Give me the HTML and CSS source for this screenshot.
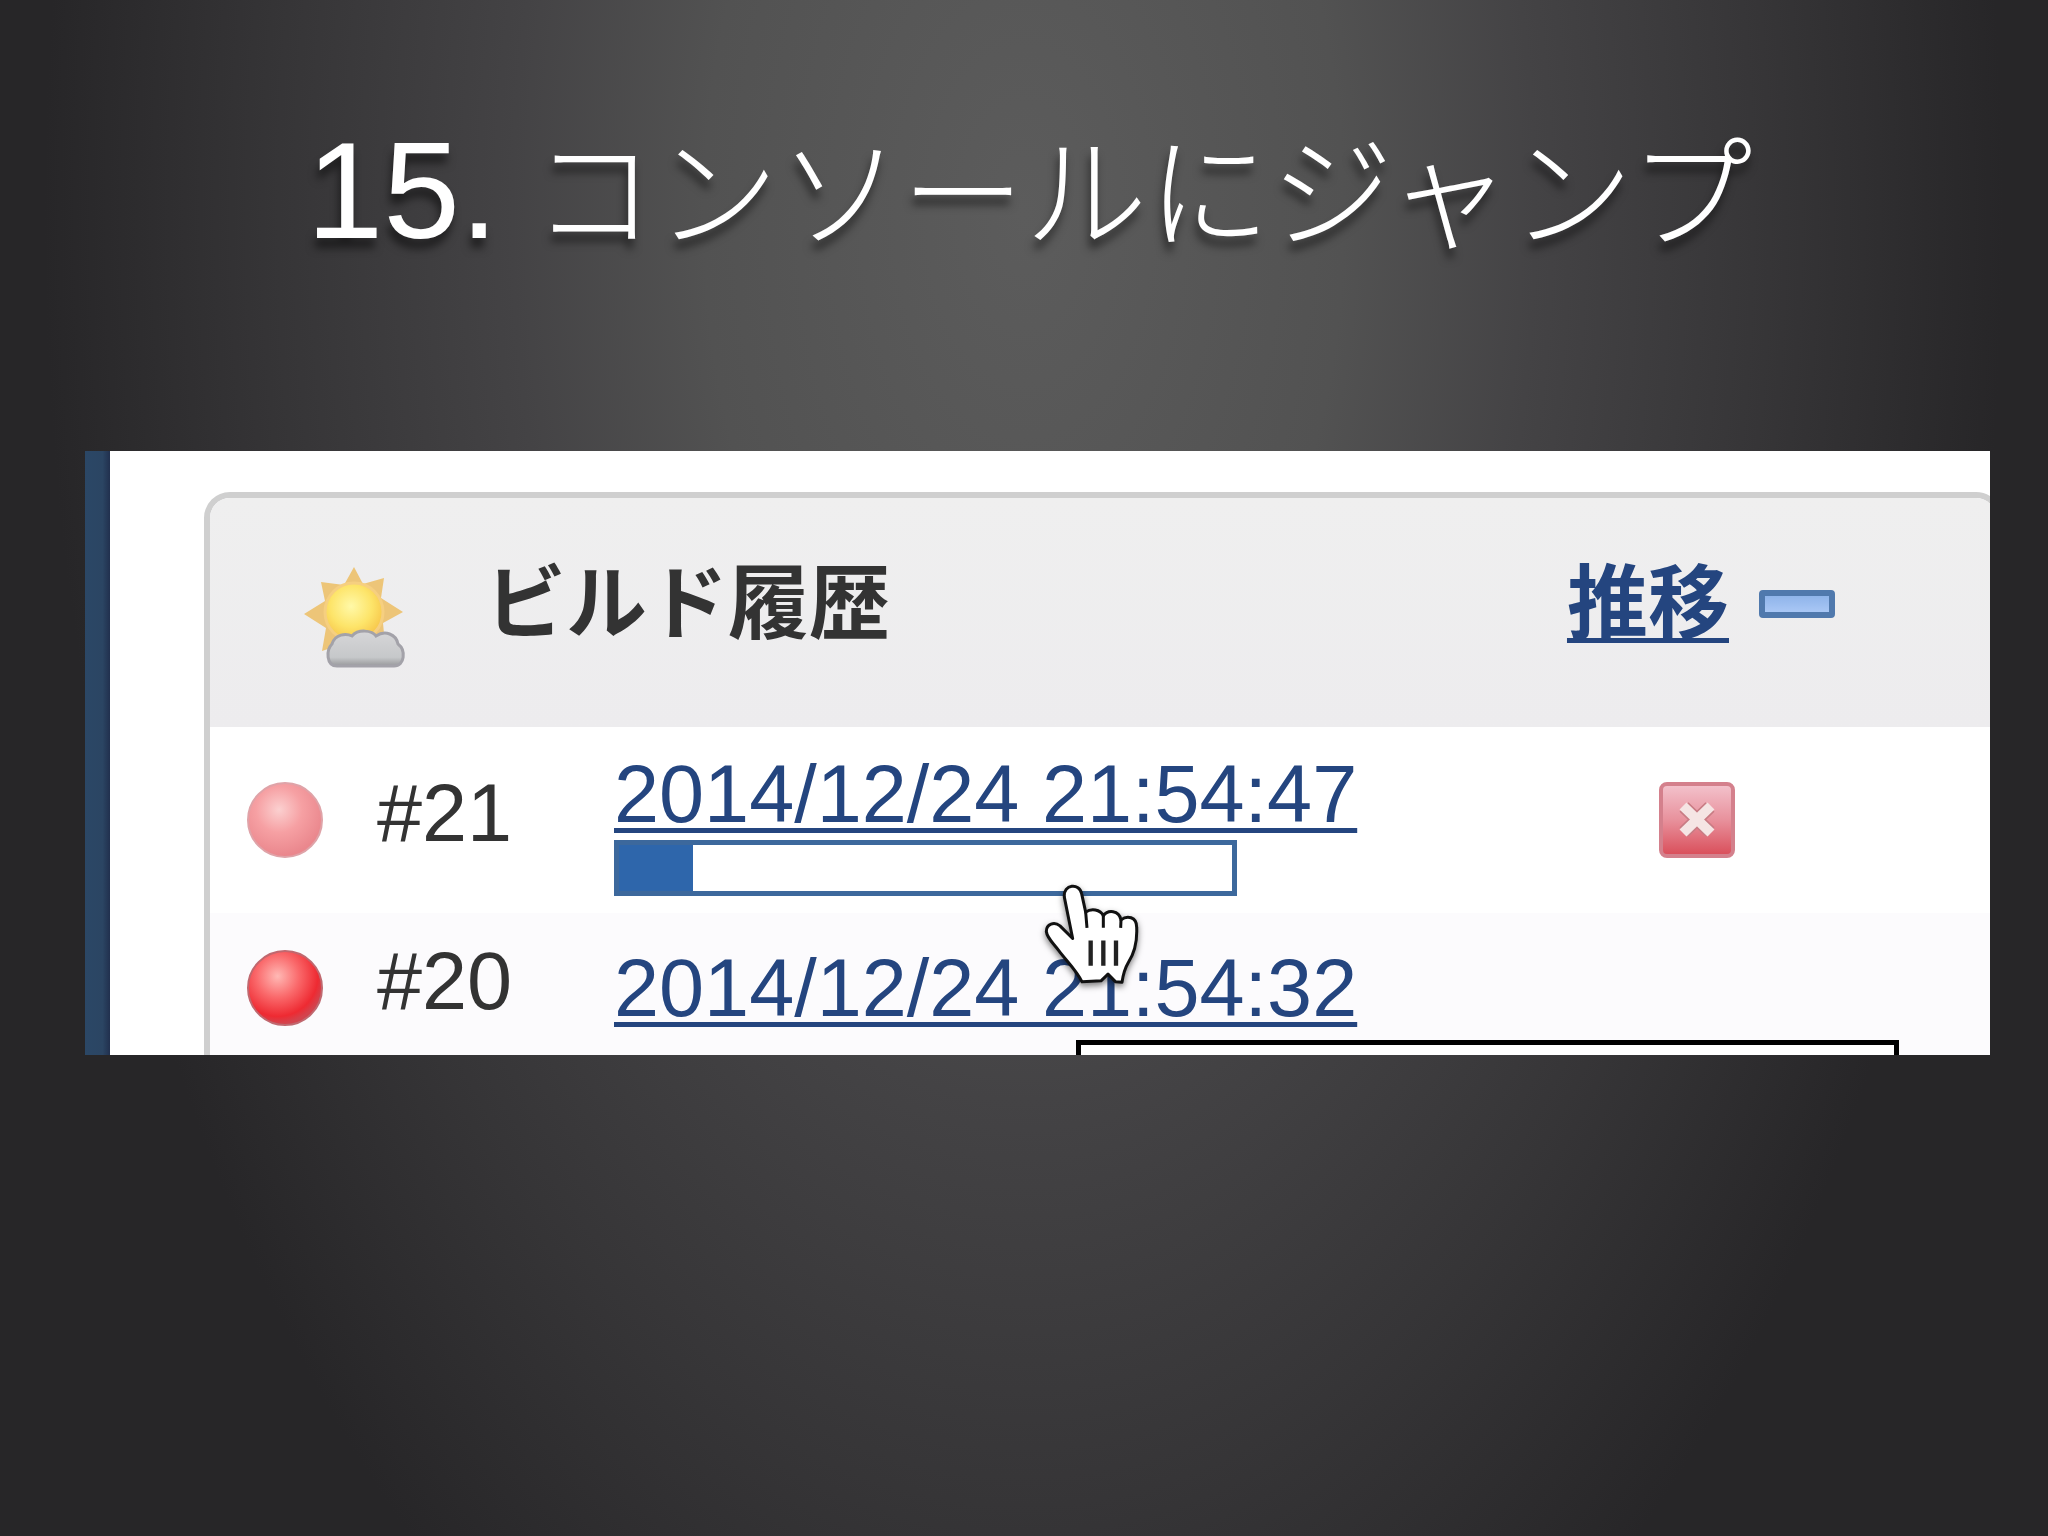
FILE: index.html
```html
<!DOCTYPE html>
<html lang="ja">
<head>
    <meta charset="UTF-8">
    <meta name="viewport" content="width=device-width, initial-scale=1.0">
    <title>15. コンソールにジャンプ</title>
    <link rel="stylesheet" href="styles.css">
</head>
<body>
    <main class="slide">
        <h1 class="slide-title">15.<span class="kana"> コンソールにジャンプ</span></h1>

        <!-- Build history capture -->
        <section class="capture">
            <div class="side-strip"></div>
            <div class="panel">
                <header class="panel-header">
                    <svg class="weather" viewBox="0 0 108 108" aria-hidden="true">
                        <defs>
                            <radialGradient id="sun" cx="45%" cy="40%" r="60%">
                                <stop offset="0" stop-color="#fff9a8"/>
                                <stop offset="0.6" stop-color="#fde469"/>
                                <stop offset="1" stop-color="#f7c64a"/>
                            </radialGradient>
                            <linearGradient id="cloud" x1="0" y1="0" x2="0" y2="1">
                                <stop offset="0" stop-color="#d6d6d8"/>
                                <stop offset="0.75" stop-color="#c6c8ca"/>
                                <stop offset="1" stop-color="#98999b"/>
                            </linearGradient>
                        </defs>
                        <path fill="#edc578" d="M53 3 L62 20 L83 14 L80 34 L102 48 L82 59 L84 80 L62 78 L52 92 L42 80 L21 87 L25 64 L3 50 L24 37 L20 18 L43 21 Z"/>
                        <circle cx="53" cy="48" r="29" fill="url(#sun)" stroke="#f6cf80" stroke-width="3"/>
                        <path fill="url(#cloud)" stroke="#a3a2a9" stroke-width="3" d="M36 102 C25 102 25 86 31 80 C34 70 45 69 51 72 C57 65 71 66 75 72 C84 66 95 70 97 80 C105 86 104 102 93 102 Z"/>
                    </svg>
                    <h2 class="panel-title">ビルド履歴</h2>
                    <a class="trend" href="#">推移</a>
                    <button class="collapse" type="button" aria-label="折りたたむ"></button>
                </header>

                <div class="build running">
                    <svg class="ball" viewBox="0 0 80 80" aria-hidden="true">
                        <defs>
                            <radialGradient id="ball-pale" cx="42%" cy="36%" r="62%">
                                <stop offset="0" stop-color="#fbd0d0"/>
                                <stop offset="0.5" stop-color="#f6a0a3"/>
                                <stop offset="1" stop-color="#ea878d"/>
                            </radialGradient>
                        </defs>
                        <circle cx="40" cy="40" r="37" fill="url(#ball-pale)" stroke="#dfa3a8" stroke-width="2"/>
                    </svg>
                    <span class="number">#21</span>
                    <div class="when">
                        <a class="date" href="#">2014/12/24 21:54:47</a>
                        <div class="progress"><div class="progress-done"></div></div>
                    </div>
                    <button class="cancel" type="button" aria-label="中止">
                        <svg viewBox="0 0 76 76" aria-hidden="true">
                            <defs>
                                <linearGradient id="stop" x1="0" y1="0" x2="0" y2="1">
                                    <stop offset="0" stop-color="#f3c3cd"/>
                                    <stop offset="0.5" stop-color="#e8919c"/>
                                    <stop offset="1" stop-color="#d94c58"/>
                                </linearGradient>
                            </defs>
                            <rect x="2" y="2" width="72" height="72" rx="6" fill="url(#stop)" stroke="#d4808c" stroke-width="4"/>
                            <path d="M25 25 L51 50 M51 25 L25 50" stroke="#c97c84" stroke-width="13"/>
                            <path d="M24 24 L52 51 M52 24 L24 51" stroke="#f5e5e4" stroke-width="10"/>
                        </svg>
                    </button>
                </div>

                <div class="build">
                    <svg class="ball" viewBox="0 0 80 80" aria-hidden="true">
                        <defs>
                            <radialGradient id="ball-red" cx="40%" cy="34%" r="64%">
                                <stop offset="0" stop-color="#ffb9b5"/>
                                <stop offset="0.45" stop-color="#fa696b"/>
                                <stop offset="0.85" stop-color="#ee2a32"/>
                                <stop offset="1" stop-color="#d3434d"/>
                            </radialGradient>
                        </defs>
                        <circle cx="40" cy="40" r="37" fill="url(#ball-red)" stroke="#c0686f" stroke-width="2"/>
                    </svg>
                    <span class="number">#20</span>
                    <div class="when">
                        <a class="date" href="#">2014/12/24 21:54:32</a>
                    </div>
                </div>
            </div>

            <div class="tooltip"></div>
            <svg class="pointer" viewBox="125 125 300 320" aria-hidden="true">
                <path fill="#fff" stroke="#111" stroke-width="9" stroke-linejoin="round" d="M217 294 L192 170 C188 130 238 126 244 160 L256 215 C272 203 300 206 309 226 C322 207 356 208 362 238 C380 224 409 228 409 260 C411 300 404 335 384 366 C372 386 368 405 365 425 L346 424 L323 401 L302 421 L245 424 C229 390 200 363 176 331 C160 309 140 293 138 273 C138 250 162 243 179 256 Z"/>
                <path fill="none" stroke="#111" stroke-width="9" d="M256 215 L260 262 M309 226 L309 262 M362 238 L361 262"/>
                <path fill="none" stroke="#222" stroke-width="13" d="M271 300 V376 M309 300 V376 M347 300 V376"/>
            </svg>
        </section>
    </main>
</body>
</html>
```
FILE: styles.css
```css
* {
    box-sizing: border-box;
}
body {
    margin: 0;
    min-height: 100vh;
    font-family: "Liberation Sans", "Noto Sans CJK JP", sans-serif;
    background: radial-gradient(ellipse 52% 120% at 50% 14%, #5c5c5c 0%, #525252 30%, #444345 48%, #363537 70%, #272628 92%);
}
.slide {
    padding: 100px 58px 0 85px;
}
.slide-title {
    margin: 0;
    padding-right: 16px;
    height: 351px;
    line-height: 180px;
    font-size: 138px;
    font-weight: normal;
    color: #fff;
    text-align: center;
    white-space: nowrap;
    text-shadow: -2px 10px 8px rgba(0, 0, 0, 0.5);
}
.kana {
    font-size: 123px;
    font-weight: 300;
}
.capture {
    position: relative;
    display: flex;
    height: 604px;
    overflow: hidden;
    background: #fff;
}
.side-strip {
    width: 25px;
    background: linear-gradient(90deg, #2b4766, #2b4563 70%, #21304e);
}
.panel {
    flex: 1;
    height: 640px;
    margin: 41px -12px 0 94px;
    border: 6px solid #cfcfcf;
    border-radius: 26px 26px 0 0;
    background: #fcfbfd;
    overflow: hidden;
    font-size: 81px;
    color: #333;
}
.panel-header {
    display: flex;
    align-items: center;
    height: 229px;
    padding: 0 161px 18px 91px;
    background: linear-gradient(#efefef, #edecee);
}
.weather {
    width: 108px;
    height: 108px;
    margin-top: 28px;
}
.panel-title {
    margin: 0 auto 0 76px;
    font-size: 81px;
    line-height: 92px;
}
.trend {
    font-weight: bold;
    line-height: 92px;
}
.trend, .date {
    color: #24457f;
    text-decoration: underline;
    text-decoration-thickness: 5px;
    text-decoration-skip-ink: none;
    text-underline-offset: 6px;
}
.collapse {
    width: 76px;
    height: 28px;
    margin-left: 30px;
    padding: 0;
    border: 6px solid #5079ad;
    border-radius: 4px;
    background: linear-gradient(#8fb4ea, #a9c7f5);
}
.build {
    display: flex;
    align-items: center;
    height: 150px;
    padding: 0 261px 0 35px;
}
.running {
    height: 186px;
    background: #fff;
}
.ball {
    width: 80px;
    height: 80px;
}
.number {
    width: 289px;
    padding: 0 0 14px 52px;
    line-height: 92px;
}
.when {
    margin-right: auto;
}
.running .when {
    padding-top: 4px;
}
.date {
    display: block;
    line-height: 92px;
    white-space: nowrap;
}
.progress {
    width: 623px;
    height: 56px;
    border: 5px solid #3c689c;
    background: #fff;
}
.progress-done {
    width: 12%;
    height: 100%;
    background: #2e66ab;
}
.cancel {
    width: 76px;
    height: 76px;
    padding: 0;
    border: none;
    background: none;
}
.cancel svg {
    display: block;
}
/* overlays on top of the build list */
.tooltip {
    position: absolute;
    left: 991px;
    right: 91px;
    bottom: -40px;
    height: 55px;
    border: 5px solid #000;
    background: #fff;
}
.pointer {
    position: absolute;
    left: 957px;
    top: 431px;
    width: 100px;
    height: 107px;
    filter: drop-shadow(0 3px 3px rgba(0, 0, 0, 0.5));
}
```
